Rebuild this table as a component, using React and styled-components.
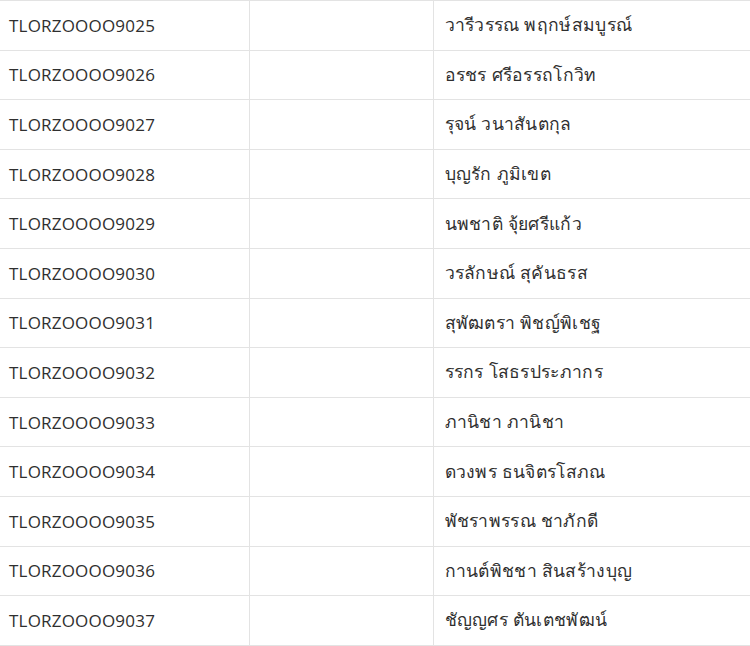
import styled, {createGlobalStyle} from 'styled-components'

const rows = [
	['TLORZOOOO9025', 'วารีวรรณ พฤกษ์สมบูรณ์'],
	['TLORZOOOO9026', 'อรชร ศรีอรรถโกวิท'],
	['TLORZOOOO9027', 'รุจน์ วนาสันตกุล'],
	['TLORZOOOO9028', 'บุญรัก ภูมิเขต'],
	['TLORZOOOO9029', 'นพชาติ จุ้ยศรีแก้ว'],
	['TLORZOOOO9030', 'วรลักษณ์ สุคันธรส'],
	['TLORZOOOO9031', 'สุพัฒตรา พิชญ์พิเชฐ'],
	['TLORZOOOO9032', 'รรกร โสธรประภากร'],
	['TLORZOOOO9033', 'ภานิชา ภานิชา'],
	['TLORZOOOO9034', 'ดวงพร ธนจิตรโสภณ'],
	['TLORZOOOO9035', 'พัชราพรรณ ชาภักดี'],
	['TLORZOOOO9036', 'กานต์พิชชา สินสร้างบุญ'],
	['TLORZOOOO9037', 'ชัญญศร ตันเตชพัฒน์'],
]

const App = () => {
	return (
		<>
			<GlobalStyle />
			<Table>
				<colgroup>
					<col style={{width: 249}} />
					<col style={{width: 184}} />
					<col />
				</colgroup>
				<tbody>
					{rows.map(([code, name]) => (
						<Row key={code}>
							<Cell>{code}</Cell>
							<Cell />
							<Cell $name>{name}</Cell>
						</Row>
					))}
				</tbody>
			</Table>
		</>
	)
}

export default App

const GlobalStyle = createGlobalStyle`
	body{
		margin: 0;
		background: #fff;
		font-family: "Open Sans", "Noto Sans", sans-serif;
		color: #333;
	}
`

const Table = styled.table`
	width: 750px;
	border-collapse: collapse;
	table-layout: fixed;
`

const Row = styled.tr`
	height: 49.6px;
`

const Cell = styled.td`
	border: 1px solid #e3e3e3;
	border-left: none;
	padding: 0 8px 0 ${p => p.$name ? 11 : 9}px;
	font-size: ${p => p.$name ? 17.5 : 17}px;
	letter-spacing: ${p => p.$name ? 0.3 : 0.2}px;
	color: #2f2f2f;
	vertical-align: middle;
	white-space: nowrap;

	&:last-child{
		border-right: none;
	}
`
